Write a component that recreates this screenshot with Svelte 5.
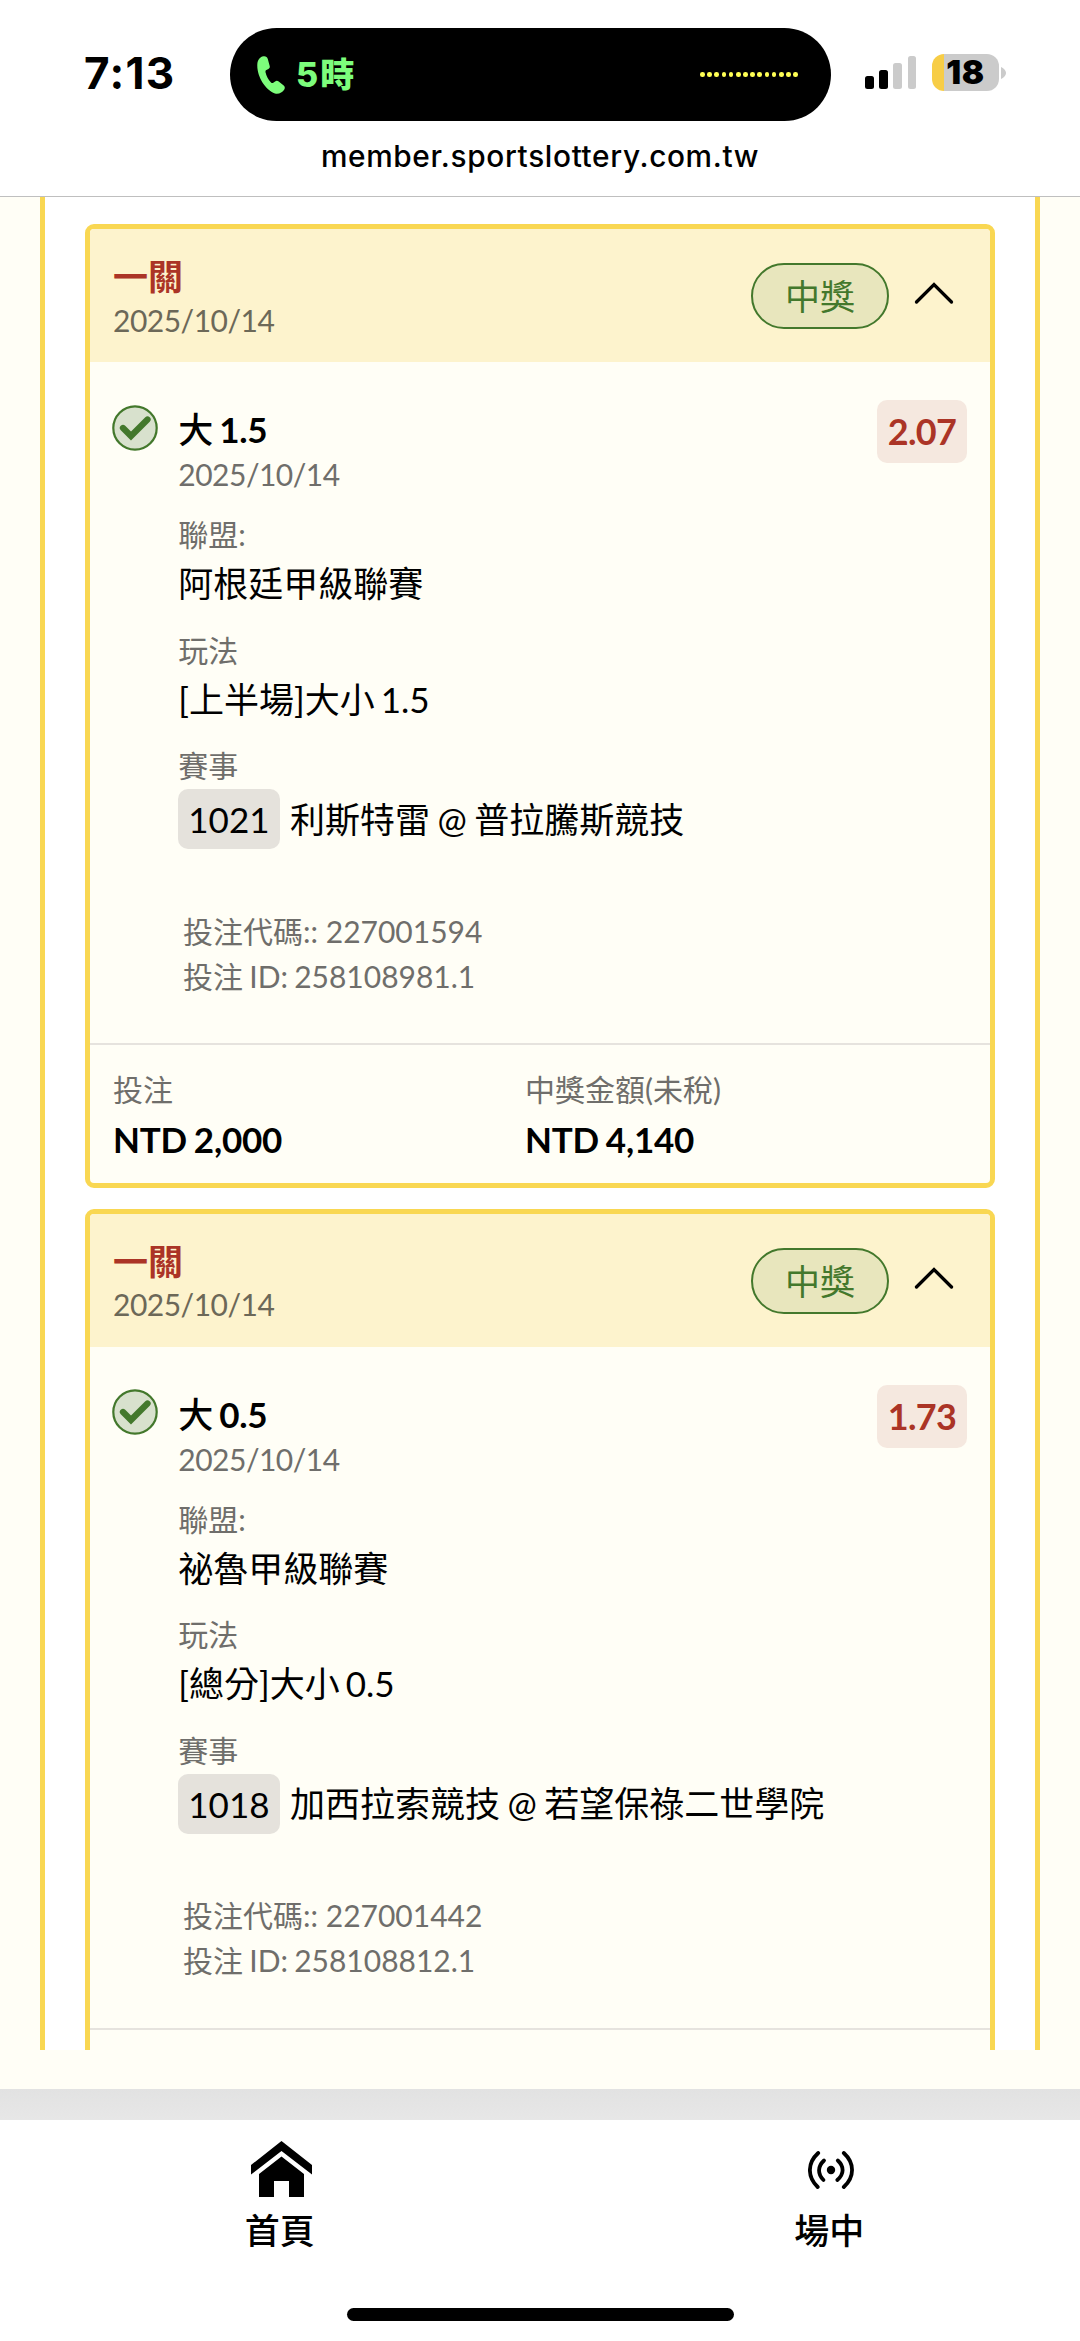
<script>
  const bets = [
    {
      title: '一關',
      date: '2025/10/14',
      status: '中獎',
      pick: { side: '大', line: '1.5' },
      odds: '2.07',
      league: '阿根廷甲級聯賽',
      market: '[上半場]大小 1.5',
      code: '1021',
      match: '利斯特雷 @ 普拉騰斯競技',
      betCode: '227001594',
      betId: '258108981.1',
      stake: 'NTD 2,000',
      payout: 'NTD 4,140',
    },
    {
      title: '一關',
      date: '2025/10/14',
      status: '中獎',
      pick: { side: '大', line: '0.5' },
      odds: '1.73',
      league: '祕魯甲級聯賽',
      market: '[總分]大小 0.5',
      code: '1018',
      match: '加西拉索競技 @ 若望保祿二世學院',
      betCode: '227001442',
      betId: '258108812.1',
    },
  ];

  const signal = [
    { h: 13, on: true },
    { h: 19, on: true },
    { h: 26, on: false },
    { h: 33, on: false },
  ];

  let open = $state([true, true]);

  function toggle(i) {
    open[i] = !open[i];
  }
</script>

<div class="screen">
  <header class="top">
    <div class="status">
      <span class="time">7:13</span>
      <div class="island">
        <svg class="phone" viewBox="0 0 28 38" width="28" height="38">
          <path d="M6.5 0.3C3 0.8 0.6 4 0.3 8.500C-0.2 20 8 34 18 37.500C21.500 38.500 25.500 36.500 27.300 33.500C28.200 32 27.900 30.700 26.700 29.500L21.700 25.500C20.500 24.600 19.200 24.600 18.100 25.500L16.300 26.800C15.500 27.300 14.700 27.200 14 26.500C11.300 23.500 9.300 19.900 8.500 16.200C8.300 15.200 8.600 14.500 9.400 14.100L11.400 13.100C12.600 12.400 13 11.300 12.700 10L10.800 3C10.200 1 8.700 0 6.500 0.300Z" fill="#7dfd7c" />
        </svg>
        <span class="call">5時</span>
        <div class="wave">
          {#each Array(14) as _}
            <i></i>
          {/each}
        </div>
      </div>
      <div class="signal">
        {#each signal as bar}
          <i class:on={bar.on} style="height: {bar.h}px"></i>
        {/each}
      </div>
      <div class="battery">18</div>
      <svg class="nub" viewBox="0 0 5 12" width="5" height="12">
        <path d="M0 0C2.500 1 5 3.500 5 6S2.500 11 0 12Z" fill="#cbcbcb" />
      </svg>
    </div>
    <div class="url">member.sportslottery.com.tw</div>
  </header>

  <main class="content">
    <div class="panel">
      {#each bets as bet, i}
        <article class="card">
          <div class="card-head">
            <div>
              <h2 class="title">{bet.title}</h2>
              <p class="date">{bet.date}</p>
            </div>
            <span class="pill">{bet.status}</span>
            <button class="toggle" onclick={() => toggle(i)} aria-expanded={open[i]} aria-label="toggle">
              <svg viewBox="0 0 40 24" width="40" height="24">
                <path d="M2.500 21L20 3.500L37.500 21" fill="none" stroke="#000" stroke-width="3.300" stroke-linecap="round" stroke-linejoin="miter" />
              </svg>
            </button>
          </div>

          {#if open[i]}
            <div class="card-body">
              <svg class="check" viewBox="0 0 46 46" width="46" height="46">
                <circle cx="23" cy="23" r="21.700" fill="#d8e1cd" stroke="#43782c" stroke-width="2.200" />
                <path d="M11 23L19 31L35.500 14.500" fill="none" stroke="#43782c" stroke-width="6.300" stroke-linecap="round" />
              </svg>
              <div class="details">
                <h3 class="pick"><span>{bet.pick.side}</span> {bet.pick.line}</h3>
                <p class="date">{bet.date}</p>
                <dl>
                  <dt>聯盟:</dt>
                  <dd>{bet.league}</dd>
                  <dt>玩法</dt>
                  <dd>{bet.market}</dd>
                  <dt>賽事</dt>
                  <dd class="match"><span class="code">{bet.code}</span>{bet.match}</dd>
                </dl>
                <div class="ids">
                  <p>投注代碼:: {bet.betCode}</p>
                  <p class="bet-id">投注 ID: {bet.betId}</p>
                </div>
              </div>
              <span class="odds">{bet.odds}</span>
            </div>
          {/if}

          <div class="card-foot">
            {#if bet.stake}
              <div>
                <p class="label">投注</p>
                <p class="amount">{bet.stake}</p>
              </div>
              <div>
                <p class="label">中獎金額(未稅)</p>
                <p class="amount">{bet.payout}</p>
              </div>
            {/if}
          </div>
        </article>
      {/each}
    </div>
  </main>

  <div class="strip"></div>

  <nav class="tabs">
    <div class="tab">
      <svg class="home" viewBox="0 0 61 56" width="61" height="56">
        <path d="M30.500 0L61 24V33.500L30.500 10L0 33.500V24Z" />
        <path d="M30.500 15.500L53 33V56H38V40H23V56H8V33Z" />
      </svg>
      <span>首頁</span>
    </div>
    <div class="tab">
      <svg class="live" viewBox="0 0 46 38" width="46" height="38">
        <g fill="none" stroke="#000" stroke-width="3.800" stroke-linecap="round">
          <path d="M10.200 2C-0.800 12 -0.800 26 9.700 36" />
          <path d="M16 9.500C9.500 15.500 9.500 23 15.500 29" />
          <path d="M35.800 2C46.800 12 46.800 26 35.800 36" />
          <path d="M29.800 9.500C36.300 15.500 36.300 23 29.300 29" />
        </g>
        <circle cx="23" cy="19" r="4.200" />
      </svg>
      <span>場中</span>
    </div>
  </nav>

  <div class="home-bar"></div>
</div>

<style>
  :global(body) {
    margin: 0;
    background: #fff;
  }

  .screen {
    width: 1080px;
    height: 2341px;
    overflow: hidden;
    display: flex;
    flex-direction: column;
    background: #fff;
    color: #000;
    font-family: Lato, 'Noto Sans CJK TC', sans-serif;
  }

  p, h2, h3, dl, dd {
    margin: 0;
  }

  .top {
    flex: none;
    box-sizing: border-box;
    height: 197px;
    border-bottom: 1px solid #bfbfbf;
    font-family: Inter, 'Noto Sans CJK TC', sans-serif;
  }

  .status {
    display: flex;
    align-items: center;
    height: 93px;
    padding-top: 28px;
  }

  .time {
    width: 146px;
    margin-bottom: 3px;
    padding-left: 84px;
    font-size: 44px;
    font-weight: 700;
    line-height: 50px;
    letter-spacing: 1.300px;
  }

  .island {
    box-sizing: border-box;
    display: flex;
    align-items: center;
    width: 601px;
    height: 93px;
    padding: 0 33px 0 27px;
    border-radius: 47px;
    background: #000;
  }

  .call {
    margin-left: 11px;
    font-size: 34px;
    font-weight: 800;
    line-height: 40px;
    letter-spacing: 2px;
    color: #7dfd7c;
  }

  .wave {
    display: flex;
    gap: 2.600px;
    margin-left: auto;
  }

  .wave i {
    width: 4.600px;
    height: 4.600px;
    border-radius: 50%;
    background: #ffff54;
  }

  .signal {
    display: flex;
    align-items: flex-end;
    gap: 5.700px;
    height: 33px;
    margin: 0 16px 4px 34px;
  }

  .signal i {
    width: 8.500px;
    border-radius: 2.500px;
    background: #cbcbcb;
  }

  .signal i.on {
    background: #000;
  }

  .battery {
    width: 67px;
    height: 37px;
    margin-bottom: 4px;
    border-radius: 12px;
    background: linear-gradient(90deg, #f7cd46 12px, #cbcbcb 12px);
    font-size: 33px;
    font-weight: 900;
    line-height: 37px;
    text-align: center;
    letter-spacing: 0.6px;
  }

  .nub {
    margin: 0 0 4px 2px;
  }

  .url {
    padding-top: 17px;
    font-size: 29.800px;
    font-weight: 500;
    line-height: 36px;
    text-align: center;
    letter-spacing: 0.65px;
  }

  .content {
    flex: none;
    box-sizing: border-box;
    height: 1892px;
    padding: 0 40px 39px;
    background: #fffef6;
  }

  .panel {
    box-sizing: border-box;
    display: flex;
    flex-direction: column;
    gap: 20.800px;
    height: 1853px;
    padding: 27px 40px 0;
    overflow: hidden;
    border: solid #f9d752;
    border-width: 0 5px;
    background: #fff;
  }

  .card {
    flex: none;
    overflow: hidden;
    border: 5px solid #f9d752;
    border-radius: 9px;
    background: #fffef6;
  }

  .card-head {
    display: flex;
    align-items: center;
    height: 87px;
    padding: 26px 36px 20px 23px;
    background: #fdf3cd;
  }

  .card-head .title,
  .card-head .date {
    line-height: 43.500px;
  }

  .title {
    font-size: 35px;
    font-weight: 700;
    color: #ab3426;
  }

  .date {
    font-size: 30px;
    letter-spacing: -0.5px;
    color: #6f6e6b;
  }

  .card-head .date {
    color: #6c6858;
  }

  .pill {
    box-sizing: border-box;
    width: 138px;
    height: 66px;
    margin: 0 25px 5px auto;
    border: 2px solid #43782c;
    border-radius: 33px;
    background: #e8e6bd;
    font-size: 35px;
    line-height: 62px;
    text-align: center;
    color: #43782c;
  }

  .toggle {
    display: flex;
    margin-bottom: 11px;
    padding: 0;
    border: 0;
    background: none;
  }

  .card-body {
    display: flex;
    align-items: flex-start;
    padding: 38px 23px 44.500px 22.300px;
  }

  .check {
    flex: none;
    margin-top: 4.500px;
  }

  .details {
    flex: 1;
    padding: 7px 0 0 20px;
    line-height: 45px;
  }

  .pick {
    font-size: 35px;
    font-weight: 700;
    letter-spacing: -0.3px;
    word-spacing: -2px;
  }

  .pick span {
    font-weight: 500;
  }

  dt,
  .ids,
  .label {
    font-size: 30px;
    color: #6f6e6b;
  }

  dt {
    margin-top: 21.500px;
  }

  dt:first-child {
    margin-top: 15px;
  }

  dd {
    margin-top: 4px;
    font-size: 35px;
    word-spacing: -3px;
  }

  .match {
    display: flex;
    align-items: center;
    margin-top: 1px;
    word-spacing: -1.500px;
  }

  .code {
    margin-right: 10.500px;
    padding: 0 10px;
    border-radius: 10px;
    background: #e5e2dc;
    line-height: 60px;
  }

  .ids {
    margin: 59.500px 0 0 4.800px;
  }

  .bet-id {
    word-spacing: -1.500px;
  }

  .odds {
    box-sizing: border-box;
    width: 90px;
    border-radius: 10px;
    background: #f5e8df;
    font-size: 36px;
    font-weight: 700;
    line-height: 63px;
    text-align: center;
    letter-spacing: -0.7px;
    color: #ab3426;
  }

  .card-foot {
    display: grid;
    grid-template-columns: 412px 1fr;
    padding: 21.500px 23px;
    border-top: 2px solid #e6e3de;
    line-height: 45px;
  }

  .amount {
    margin-top: 5px;
    font-size: 35px;
    font-weight: 700;
    letter-spacing: -0.2px;
    word-spacing: -1.500px;
  }

  .strip {
    flex: none;
    height: 31px;
    background: linear-gradient(#e2e2e2, #e7e7e7);
  }

  .tabs {
    display: flex;
    height: 188px;
    padding-left: 7px;
  }

  .tab {
    display: flex;
    flex: 0 0 549.500px;
    flex-direction: column;
    align-items: center;
    font-size: 35px;
    font-weight: 500;
    line-height: 45px;
  }

  .tab span {
    padding-right: 4px;
  }

  .home {
    margin: 21px 0 11px;
  }

  .live {
    margin: 31px 0 19px;
  }

  .home-bar {
    width: 387px;
    height: 13px;
    margin: 0 auto;
    border-radius: 7px;
    background: #000;
  }
</style>
